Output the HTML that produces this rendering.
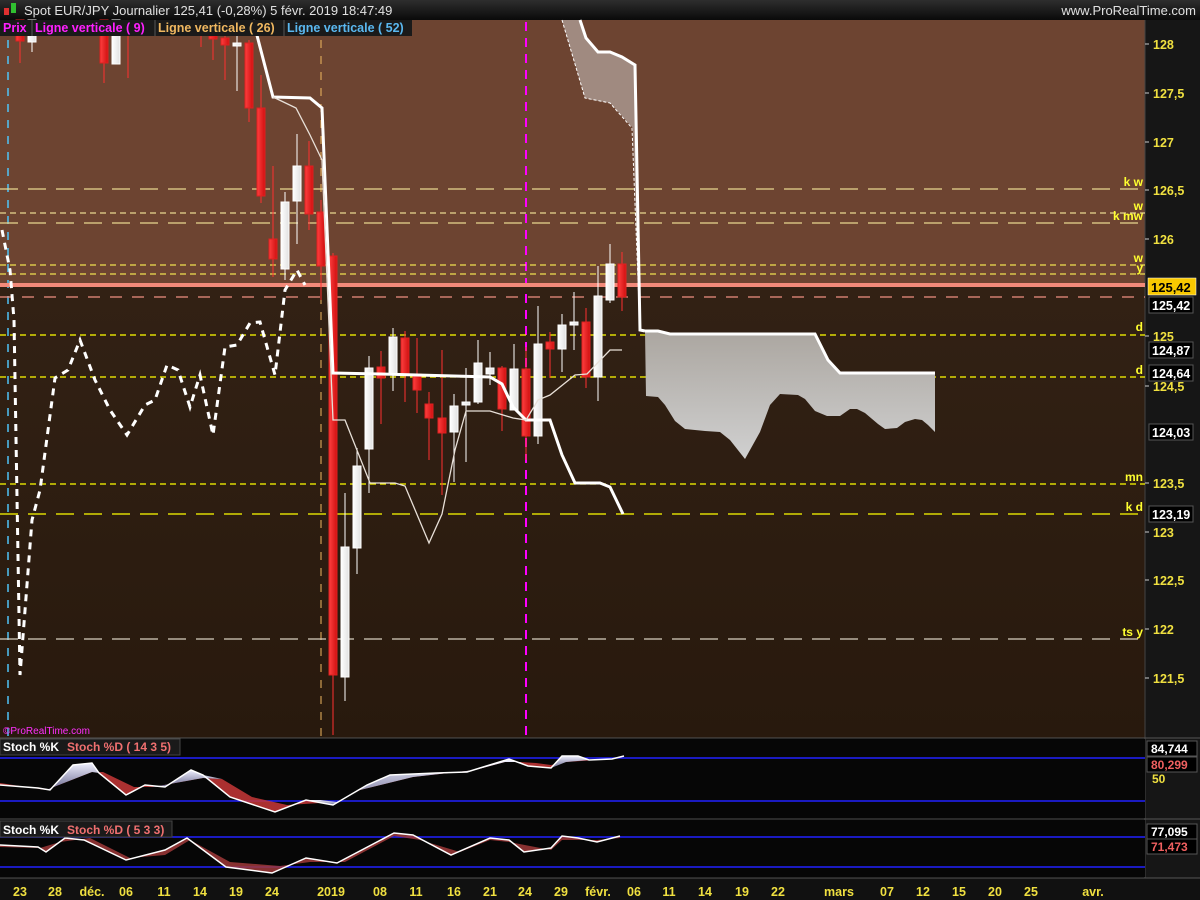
<!DOCTYPE html>
<html><head><meta charset="utf-8"><style>
html,body{margin:0;padding:0;background:#000;width:1200px;height:900px;overflow:hidden;font-family:"Liberation Sans",sans-serif}
svg{display:block}
</style></head><body>
<svg width="1200" height="900" xmlns="http://www.w3.org/2000/svg" font-family="Liberation Sans, sans-serif">
<defs>
<linearGradient id="bg" x1="0" y1="0" x2="0" y2="1"><stop offset="0" stop-color="#382619"/><stop offset="1" stop-color="#28190d"/></linearGradient>
<linearGradient id="top" x1="0" y1="0" x2="0" y2="1"><stop offset="0" stop-color="#2e2e2e"/><stop offset="1" stop-color="#0a0a0a"/></linearGradient>
<linearGradient id="cl" x1="0" y1="0" x2="0" y2="1"><stop offset="0" stop-color="#aba6a0"/><stop offset="1" stop-color="#d0d0d0"/></linearGradient>
<linearGradient id="rd" x1="0" y1="0" x2="1" y2="0"><stop offset="0" stop-color="#ff4040"/><stop offset="1" stop-color="#d01010"/></linearGradient>
<linearGradient id="wh" x1="0" y1="0" x2="1" y2="0"><stop offset="0" stop-color="#ffffff"/><stop offset="1" stop-color="#e0e0e0"/></linearGradient>
<linearGradient id="s1" x1="0" y1="0" x2="0" y2="1"><stop offset="0" stop-color="#f0f0ff"/><stop offset="1" stop-color="#6a6a90"/></linearGradient>
</defs>
<!-- top bar -->
<rect x="0" y="0" width="1200" height="20" fill="url(#top)"/>
<rect x="4" y="8" width="5" height="7" fill="#e03030"/><rect x="11" y="3" width="5" height="10" fill="#30c030"/>
<text x="24" y="15" font-size="13" fill="#e0e0e0">Spot EUR/JPY    Journalier    125,41 (-0,28%)    5 févr. 2019 18:47:49</text>
<text x="1196" y="15" font-size="13" fill="#e0e0e0" text-anchor="end">www.ProRealTime.com</text>
<!-- chart bg -->
<rect x="0" y="20" width="1145" height="718" fill="url(#bg)"/>
<rect x="0" y="20" width="1145" height="265" fill="#6d4431"/>
<!-- right axis -->
<rect x="1145" y="20" width="55" height="858" fill="#161616"/>
<line x1="1145" y1="20" x2="1145" y2="878" stroke="#444"/>
<!-- vertical lines -->
<line x1="8" y1="24" x2="8" y2="738" stroke="#4fc3f7" stroke-width="1.5" stroke-dasharray="8,8"/>
<line x1="321" y1="40" x2="321" y2="738" stroke="#f0b860" stroke-width="1" stroke-dasharray="8,8"/>
<line x1="526" y1="22" x2="526" y2="738" stroke="#ff00ff" stroke-width="2" stroke-dasharray="9,7"/>
<!-- horizontals -->
<g stroke-width="1.3">
<line x1="0" y1="189" x2="1145" y2="189" stroke="#e8d890" stroke-dasharray="18,10"/>
<line x1="0" y1="213" x2="1145" y2="213" stroke="#e8d890" stroke-dasharray="6,4"/>
<line x1="0" y1="223" x2="1145" y2="223" stroke="#e8d890" stroke-dasharray="18,10"/>
<line x1="0" y1="265" x2="1145" y2="265" stroke="#f0e050" stroke-dasharray="6,4"/>
<line x1="0" y1="274" x2="1145" y2="274" stroke="#f0e050" stroke-dasharray="6,4"/>
<line x1="0" y1="297" x2="1145" y2="297" stroke="#f09080" stroke-dasharray="12,10"/>
<line x1="0" y1="335" x2="1145" y2="335" stroke="#ffff00" stroke-dasharray="6,4"/>
<line x1="0" y1="377" x2="1145" y2="377" stroke="#ffff00" stroke-dasharray="6,4"/>
<line x1="0" y1="484" x2="1145" y2="484" stroke="#ffff00" stroke-dasharray="6,4"/>
<line x1="0" y1="514" x2="1145" y2="514" stroke="#ffff00" stroke-dasharray="18,10"/>
<line x1="0" y1="639" x2="1145" y2="639" stroke="#d8d0c0" stroke-dasharray="18,10"/>
</g>
<rect x="0" y="283" width="1145" height="4" fill="#f28a7a"/>
<g font-size="12" font-weight="bold" fill="#ffff30" text-anchor="end">
<text x="1143" y="186">k w</text><text x="1143" y="210">w</text><text x="1143" y="220">k mw</text>
<text x="1143" y="262">w</text><text x="1143" y="272">y</text><text x="1143" y="331">d</text>
<text x="1143" y="374">d</text><text x="1143" y="481">mn</text><text x="1143" y="511">k d</text><text x="1143" y="636">ts y</text>
</g>
<!-- upper cloud -->
<polygon points="562,20 580,20 586,38 598,52 610,52 622,57 635,65 640,330 633,128 610,103 593,100 585,98" fill="#a08a80"/>
<polyline points="580,20 586,38 598,52 610,52 622,57 635,65 640,330 645,331" fill="none" stroke="#fff" stroke-width="3"/>
<polyline points="562,20 585,98 610,103 632,128 640,330" fill="none" stroke="#fff" stroke-width="1" stroke-dasharray="3,2"/>
<!-- lower cloud -->
<polygon points="645,331 658,331 670,334 815,334 828,360 840,373 935,373 935,432 928,425 922,420 915,419 905,422 897,428 885,429 878,424 865,413 857,409 850,409 840,416 827,416 815,411 805,399 798,395 780,394 770,405 760,432 745,459 730,440 720,432 705,431 685,429 675,421 665,405 658,397 646,396" fill="url(#cl)"/>
<polyline points="645,331 658,331 670,334 815,334 828,360 840,373 935,373" fill="none" stroke="#fff" stroke-width="3"/>
<!-- chikou dashed -->
<polyline points="2,230 10,270 14,320 20,675 32,520 40,490 55,378 68,370 80,340 95,380 110,410 127,435 145,405 155,400 167,365 178,370 190,407 200,375 213,435 225,347 237,345 250,323 260,322 275,375 285,290 297,270 305,285" fill="none" stroke="#fff" stroke-width="3" stroke-dasharray="7,6"/>
<!-- candles -->
<g stroke-width="1">
<g stroke="#ff3030">
<line x1="20" y1="20" x2="20" y2="63"/><line x1="104" y1="20" x2="104" y2="83"/><line x1="128" y1="20" x2="128" y2="78"/><line x1="201" y1="20" x2="201" y2="47"/>
<line x1="213" y1="20" x2="213" y2="60"/><line x1="225" y1="20" x2="225" y2="80"/><line x1="249" y1="40" x2="249" y2="122"/><line x1="261" y1="75" x2="261" y2="203"/>
<line x1="273" y1="166" x2="273" y2="277"/><line x1="309" y1="141" x2="309" y2="230"/><line x1="321" y1="200" x2="321" y2="300"/><line x1="333" y1="253" x2="333" y2="735"/>
<line x1="381" y1="351" x2="381" y2="424"/><line x1="405" y1="331" x2="405" y2="402"/><line x1="417" y1="338" x2="417" y2="413"/><line x1="429" y1="392" x2="429" y2="460"/>
<line x1="442" y1="350" x2="442" y2="495"/><line x1="502" y1="366" x2="502" y2="431"/><line x1="526" y1="347" x2="526" y2="460"/><line x1="550" y1="332" x2="550" y2="378"/>
<line x1="586" y1="308" x2="586" y2="388"/><line x1="622" y1="252" x2="622" y2="311"/>
</g>
<g stroke="#fff">
<line x1="32" y1="20" x2="32" y2="52"/><line x1="237" y1="20" x2="237" y2="91"/><line x1="285" y1="192" x2="285" y2="280"/><line x1="297" y1="134" x2="297" y2="244"/>
<line x1="345" y1="493" x2="345" y2="701"/><line x1="357" y1="448" x2="357" y2="574"/><line x1="369" y1="356" x2="369" y2="493"/><line x1="393" y1="328" x2="393" y2="391"/>
<line x1="454" y1="394" x2="454" y2="482"/><line x1="466" y1="368" x2="466" y2="462"/><line x1="478" y1="340" x2="478" y2="404"/><line x1="490" y1="352" x2="490" y2="385"/>
<line x1="514" y1="344" x2="514" y2="410"/><line x1="538" y1="306" x2="538" y2="444"/><line x1="562" y1="314" x2="562" y2="372"/><line x1="574" y1="292" x2="574" y2="350"/>
<line x1="598" y1="266" x2="598" y2="401"/><line x1="610" y1="244" x2="610" y2="303"/>
</g>
<g fill="url(#rd)" stroke="#e02020">
<rect x="16" y="20" width="8" height="21"/><rect x="100" y="20" width="8" height="43"/><rect x="209" y="36" width="8" height="3"/><rect x="221" y="38" width="8" height="7"/>
<rect x="245" y="43" width="8" height="65"/><rect x="257" y="108" width="8" height="88"/><rect x="269" y="239" width="8" height="20"/><rect x="305" y="166" width="8" height="48"/>
<rect x="317" y="212" width="8" height="54"/><rect x="329" y="256" width="8" height="419"/><rect x="377" y="367" width="8" height="11"/><rect x="401" y="338" width="8" height="37"/>
<rect x="413" y="374" width="8" height="16"/><rect x="425" y="404" width="8" height="14"/><rect x="438" y="418" width="8" height="15"/><rect x="498" y="368" width="8" height="41"/>
<rect x="522" y="369" width="8" height="67"/><rect x="546" y="342" width="8" height="7"/><rect x="582" y="322" width="8" height="55"/><rect x="618" y="264" width="8" height="33"/>
</g>
<g fill="url(#wh)" stroke="#fff">
<rect x="28" y="20" width="8" height="22"/><rect x="112" y="20" width="8" height="44"/><rect x="233" y="43" width="8" height="3"/><rect x="281" y="202" width="8" height="67"/>
<rect x="293" y="166" width="8" height="35"/><rect x="341" y="547" width="8" height="130"/><rect x="353" y="466" width="8" height="82"/><rect x="365" y="368" width="8" height="81"/>
<rect x="389" y="337" width="8" height="38"/><rect x="450" y="406" width="8" height="26"/><rect x="462" y="402" width="8" height="3"/><rect x="474" y="363" width="8" height="39"/>
<rect x="486" y="368" width="8" height="6"/><rect x="510" y="369" width="8" height="41"/><rect x="534" y="344" width="8" height="92"/><rect x="558" y="325" width="8" height="24"/>
<rect x="570" y="322" width="8" height="3"/><rect x="594" y="296" width="8" height="81"/><rect x="606" y="264" width="8" height="36"/>
</g>
</g>
<polyline points="253,20 273,97 310,98 322,108 333,373 380,374 490,377 502,384 513,407 526,420 550,420 562,455 575,483 600,483 610,487 623,514" fill="none" stroke="#fff" stroke-width="3"/>
<polyline points="273,97 296,108 310,135 322,160 333,420 345,420 370,483 395,483 405,486 429,543 442,514 455,450 466,411 490,411 513,418 526,420 538,400 550,395 575,375 587,374 610,350 622,350" fill="none" stroke="#e8e0d8" stroke-width="1.3"/>
<!-- legend (on top) -->
<rect x="0" y="20" width="412" height="16" fill="#1a1a1a"/>
<g font-size="12.5" font-weight="bold">
<text x="3" y="32" fill="#ff20ff">Prix</text>
<text x="35" y="32" fill="#ff20ff">Ligne verticale ( 9)</text>
<text x="158" y="32" fill="#f0b860">Ligne verticale ( 26)</text>
<text x="287" y="32" fill="#5ab8f0">Ligne verticale ( 52)</text>
</g>
<line x1="32" y1="20" x2="32" y2="36" stroke="#555"/><line x1="155" y1="20" x2="155" y2="36" stroke="#555"/><line x1="284" y1="20" x2="284" y2="36" stroke="#555"/>
<!-- price axis labels -->
<g font-size="12.5" font-weight="bold" fill="#f0e040">
<text x="1153" y="49">128</text><text x="1153" y="98">127,5</text><text x="1153" y="147">127</text><text x="1153" y="195">126,5</text>
<text x="1153" y="244">126</text><text x="1153" y="341">125</text><text x="1153" y="391">124,5</text><text x="1153" y="488">123,5</text>
<text x="1153" y="537">123</text><text x="1153" y="585">122,5</text><text x="1153" y="634">122</text><text x="1153" y="683">121,5</text>
</g>
<g stroke="#ccc"><line x1="1145" y1="44" x2="1149" y2="44"/><line x1="1145" y1="93" x2="1149" y2="93"/><line x1="1145" y1="142" x2="1149" y2="142"/><line x1="1145" y1="190" x2="1149" y2="190"/><line x1="1145" y1="239" x2="1149" y2="239"/><line x1="1145" y1="336" x2="1149" y2="336"/><line x1="1145" y1="386" x2="1149" y2="386"/><line x1="1145" y1="483" x2="1149" y2="483"/><line x1="1145" y1="532" x2="1149" y2="532"/><line x1="1145" y1="580" x2="1149" y2="580"/><line x1="1145" y1="629" x2="1149" y2="629"/><line x1="1145" y1="678" x2="1149" y2="678"/></g>
<rect x="1148" y="278" width="48" height="17" fill="#f8c800" stroke="#fff" stroke-width="0.5"/>
<text x="1151" y="292" font-size="13" font-weight="bold" fill="#000">125,42</text>
<g fill="#000" stroke="#555"><rect x="1149" y="297" width="44" height="16"/><rect x="1149" y="342" width="44" height="16"/><rect x="1149" y="365" width="44" height="16"/><rect x="1149" y="424" width="44" height="16"/><rect x="1149" y="506" width="44" height="16"/></g>
<g font-size="12.5" font-weight="bold" fill="#fff"><text x="1152" y="310">125,42</text><text x="1152" y="355">124,87</text><text x="1152" y="378">124,64</text><text x="1152" y="437">124,03</text><text x="1152" y="519">123,19</text></g>
<text x="3" y="734" font-size="10" fill="#ff30ff">©ProRealTime.com</text>
<!-- panel 1 -->
<rect x="0" y="739" width="1145" height="79" fill="#060606"/>
<line x1="0" y1="738" x2="1200" y2="738" stroke="#555"/>
<line x1="0" y1="758" x2="1145" y2="758" stroke="#2020ff" stroke-width="1.5"/>
<line x1="0" y1="801" x2="1145" y2="801" stroke="#2020ff" stroke-width="1.5"/>
<polygon points="0,785 38,788 50,790 73,765 92,763 99,773 126,795 145,785 165,787 191,770 203,775 230,797 275,812 306,800 333,805 367,785 390,775 436,773 467,772 509,759 528,766 551,768 562,756 578,756 589,760 612,759 624,756 620,758 597,760 566,762 551,765 536,763 520,762 505,762 475,770 413,777 360,790 337,802 287,805 252,797 222,779 203,778 153,787 134,787 103,772 92,772 46,790 0,783" fill="#c83838" opacity="0.85"/>
<polygon points="50,790 73,765 92,763 99,773 92,772 46,790" fill="url(#s1)"/>
<polygon points="165,787 191,770 203,775 222,779 203,778 153,787" fill="url(#s1)"/>
<polygon points="306,800 333,805 337,802 320,800" fill="url(#s1)"/>
<polygon points="340,804 367,785 390,775 436,773 467,772 509,759 528,766 520,762 505,762 475,770 413,777 360,790" fill="url(#s1)"/>
<polygon points="551,768 562,756 578,756 589,760 566,762" fill="url(#s1)"/>
<polyline points="0,785 38,788 50,790 73,765 92,763 99,773 126,795 145,785 165,787 191,770 203,775 230,797 275,812 306,800 333,805 367,785 390,775 436,773 467,772 509,759 528,766 551,768 562,756 578,756 589,760 612,759 624,756" fill="none" stroke="#fff" stroke-width="1.5"/>
<g font-size="12" font-weight="bold"><rect x="0" y="739" width="180" height="16" fill="#1a1a1a" stroke="#444"/><text x="3" y="751" fill="#fff">Stoch %K</text><text x="67" y="751" fill="#f07070">Stoch %D ( 14 3 5)</text></g>
<rect x="1147" y="741" width="50" height="15" fill="#000" stroke="#555"/><text x="1151" y="753" font-size="12" font-weight="bold" fill="#fff">84,744</text>
<rect x="1147" y="757" width="50" height="15" fill="#000" stroke="#555"/><text x="1151" y="769" font-size="12" font-weight="bold" fill="#f06060">80,299</text>
<text x="1152" y="783" font-size="12" font-weight="bold" fill="#f0e040">50</text>
<!-- panel 2 -->
<rect x="0" y="820" width="1145" height="57" fill="#060606"/>
<line x1="0" y1="819" x2="1200" y2="819" stroke="#555"/>
<line x1="0" y1="837" x2="1145" y2="837" stroke="#2020ff" stroke-width="1.5"/>
<line x1="0" y1="867" x2="1145" y2="867" stroke="#2020ff" stroke-width="1.5"/>
<polygon points="0,845 38,847 46,852 65,838 84,840 126,860 165,850 187,838 226,867 272,873 306,858 337,863 394,833 413,835 451,855 490,838 509,840 524,852 551,848 562,836 578,838 597,842 620,836 620,838 597,840 578,840 562,840 551,850 530,846 509,842 490,840 460,852 420,840 394,836 345,862 310,862 280,866 230,862 190,840 165,855 130,858 90,838 60,842 40,848 0,847" fill="#a03a3a" opacity="0.85"/>
<polyline points="0,845 38,847 46,852 65,838 84,840 126,860 165,850 187,838 226,867 272,873 306,858 337,863 394,833 413,835 451,855 490,838 509,840 524,852 551,848 562,836 578,838 597,842 620,836" fill="none" stroke="#fff" stroke-width="1.5"/>
<g font-size="12" font-weight="bold"><rect x="0" y="821" width="172" height="16" fill="#1a1a1a" stroke="#444"/><text x="3" y="834" fill="#fff">Stoch %K</text><text x="67" y="834" fill="#f07070">Stoch %D ( 5 3 3)</text></g>
<rect x="1147" y="824" width="50" height="15" fill="#000" stroke="#555"/><text x="1151" y="836" font-size="12" font-weight="bold" fill="#fff">77,095</text>
<rect x="1147" y="839" width="50" height="15" fill="#000" stroke="#555"/><text x="1151" y="851" font-size="12" font-weight="bold" fill="#f06060">71,473</text>
<!-- x axis -->
<rect x="0" y="878" width="1200" height="22" fill="#111"/>
<line x1="0" y1="878" x2="1200" y2="878" stroke="#555"/>
<g font-size="12.5" font-weight="bold" fill="#f0e040" text-anchor="middle">
<text x="20" y="896">23</text><text x="55" y="896">28</text><text x="92" y="896">déc.</text><text x="126" y="896">06</text><text x="164" y="896">11</text><text x="200" y="896">14</text><text x="236" y="896">19</text><text x="272" y="896">24</text><text x="331" y="896">2019</text><text x="380" y="896">08</text><text x="416" y="896">11</text><text x="454" y="896">16</text><text x="490" y="896">21</text><text x="525" y="896">24</text><text x="561" y="896">29</text><text x="598" y="896">févr.</text><text x="634" y="896">06</text><text x="669" y="896">11</text><text x="705" y="896">14</text><text x="742" y="896">19</text><text x="778" y="896">22</text><text x="839" y="896">mars</text><text x="887" y="896">07</text><text x="923" y="896">12</text><text x="959" y="896">15</text><text x="995" y="896">20</text><text x="1031" y="896">25</text><text x="1093" y="896">avr.</text>
</g>
</svg>
</body></html>
